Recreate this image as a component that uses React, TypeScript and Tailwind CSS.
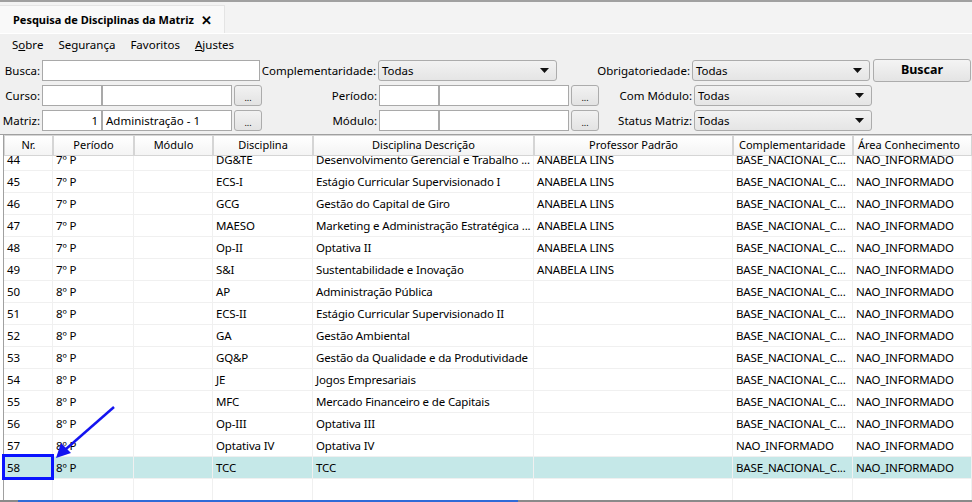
import React from "react";

const font = "[font-family:'Noto_Sans',sans-serif]";

const cols = [53, 81, 79, 100, 221, 199, 120, 119];

type Row = [string, string, string, string, string, string, string, string];

const A = "ANABELA LINS";
const B = "BASE_NACIONAL_C...";
const N = "NAO_INFORMADO";

const rows: Row[] = [
  ["44", "7º P", "", "DG&TE", "Desenvolvimento Gerencial e Trabalho ...", A, B, N],
  ["45", "7º P", "", "ECS-I", "Estágio Curricular Supervisionado I", A, B, N],
  ["46", "7º P", "", "GCG", "Gestão do Capital de Giro", A, B, N],
  ["47", "7º P", "", "MAESO", "Marketing e Administração Estratégica ...", A, B, N],
  ["48", "7º P", "", "Op-II", "Optativa II", A, B, N],
  ["49", "7º P", "", "S&I", "Sustentabilidade e Inovação", A, B, N],
  ["50", "8º P", "", "AP", "Administração Pública", "", B, N],
  ["51", "8º P", "", "ECS-II", "Estágio Curricular Supervisionado II", "", B, N],
  ["52", "8º P", "", "GA", "Gestão Ambiental", "", B, N],
  ["53", "8º P", "", "GQ&P", "Gestão da Qualidade e da Produtividade", "", B, N],
  ["54", "8º P", "", "JE", "Jogos Empresariais", "", B, N],
  ["55", "8º P", "", "MFC", "Mercado Financeiro e de Capitais", "", B, N],
  ["56", "8º P", "", "Op-III", "Optativa III", "", B, N],
  ["57", "8º P", "", "Optativa IV", "Optativa IV", "", N, N],
  ["58", "8º P", "", "TCC", "TCC", "", B, N],
  ["", "", "", "", "", "", "", ""],
];

const headers = [
  { t: "Nr.", c: "justify-center" },
  { t: "Período", c: "justify-center" },
  { t: "Módulo", c: "justify-center" },
  { t: "Disciplina", c: "justify-center" },
  { t: "Disciplina Descrição", c: "justify-center" },
  { t: "Professor Padrão", c: "justify-center" },
  { t: "Complementaridade", c: "justify-start pl-[5px]" },
  { t: "Área Conhecimento", c: "justify-start pl-[4px]" },
];

function Label({ w, children }: { w: number; children: React.ReactNode }) {
  return (
    <div
      className="flex items-center justify-end pr-[2px] text-[11.5px] text-black whitespace-nowrap"
      style={{ width: w }}
    >
      {children}
    </div>
  );
}

function Input({ w, children, right }: { w: number; children?: React.ReactNode; right?: boolean }) {
  return (
    <div
      className={`h-[21px] bg-white border border-[#a9a9a9] flex items-center px-[3px] text-[11.5px] text-black whitespace-nowrap overflow-hidden ${right ? "justify-end" : ""}`}
      style={{ width: w }}
    >
      {children}
    </div>
  );
}

function Select({ w }: { w: number }) {
  return (
    <div
      className="h-[21px] rounded-[3px] border border-[#acacac] bg-gradient-to-b from-[#f2f2f2] to-[#e5e5e5] flex items-center justify-between pl-[3px] pr-[7px] text-[11.5px] text-black"
      style={{ width: w }}
    >
      <span>Todas</span>
      <svg width="9" height="5" viewBox="0 0 9 5">
        <path d="M0 0 H9 L4.5 5 Z" fill="#111" />
      </svg>
    </div>
  );
}

function Dots() {
  return (
    <div className="ml-[2px] w-[28px] h-[21px] rounded-[3px] border border-[#acacac] bg-gradient-to-b from-[#f2f2f2] to-[#e3e3e3] flex items-end justify-center pb-[3px] text-[9px] leading-none text-black">
      ...
    </div>
  );
}

export default function App() {
  return (
    <div className={`${font} w-[972px] h-[502px] bg-[#f0f0f0] overflow-hidden relative`}>
      {/* top line */}
      <div className="h-[2px] bg-[#a0a0a0]" />
      {/* tab strip */}
      <div className="h-[32px] bg-[#f3f3f3] flex items-end border-b border-white">
        <div className="w-[225px] h-[28px] bg-[#f9f9f9] border-r border-t border-[#e4e4e4] flex items-center pl-[13px] pt-[1px] text-[11px] font-bold text-black">
          <span>Pesquisa de Disciplinas da Matriz</span>
          <span className="ml-[7px] text-[13px] leading-none">✕</span>
        </div>
      </div>
      {/* menu */}
      <div className="h-[22px] flex items-center text-[11.5px] text-black">
        <span className="ml-[12px]">
          S<span className="underline">o</span>bre
        </span>
        <span className="ml-[15px]">Segurança</span>
        <span className="ml-[15px]">Favoritos</span>
        <span className="ml-[15px]">
          <span className="underline">A</span>justes
        </span>
      </div>
      {/* filters */}
      <div className="pt-[4px] flex flex-col gap-[4px]">
        <div className="flex items-center h-[21px]">
          <Label w={42}>Busca:</Label>
          <Input w={218} />
          <Label w={118}>Complementaridade:</Label>
          <Select w={179} />
          <Label w={135}>Obrigatoriedade:</Label>
          <Select w={178} />
          <div className="ml-[3px] w-[98px] h-[23px] rounded-[3px] border border-[#acacac] bg-gradient-to-b from-[#f4f4f4] to-[#e4e4e4] flex items-center justify-center text-[12.5px] font-bold text-black">
            Buscar
          </div>
        </div>
        <div className="flex items-center h-[21px]">
          <Label w={42}>Curso:</Label>
          <Input w={60} />
          <Input w={130} />
          <Dots />
          <Label w={117}>Período:</Label>
          <Input w={60} />
          <Input w={130} />
          <Dots />
          <Label w={95}>Com Módulo:</Label>
          <Select w={178} />
        </div>
        <div className="flex items-center h-[21px]">
          <Label w={42}>Matriz:</Label>
          <Input w={60} right>
            1
          </Input>
          <Input w={130}>Administração - 1</Input>
          <Dots />
          <Label w={117}>Módulo:</Label>
          <Input w={60} />
          <Input w={130} />
          <Dots />
          <Label w={95}>Status Matriz:</Label>
          <Select w={178} />
        </div>
      </div>
      {/* table */}
      <div className="mt-[3px] bg-white border-t border-[#a0a0a0] h-[366px] pl-[3px] relative">
        <div className="border-l border-[#a0a0a0] h-full flex flex-col">
          <div className="flex h-[21px] shrink-0">
            {headers.map((h, i) => (
              <div
                key={i}
                className={`h-full flex items-center border border-[#d5d5d5] bg-gradient-to-b from-white to-[#f4f4f4] text-[11px] text-black whitespace-nowrap overflow-hidden ${h.c}`}
                style={{ width: i === 0 ? cols[0] - 4 : cols[i] }}
              >
                {h.t}
              </div>
            ))}
          </div>
          <div className="flex-1 overflow-hidden">
            <div className="-mt-[7px]">
              {rows.map((r, ri) => {
                const sel = r[0] === "58";
                return (
                  <div key={ri} className={`flex h-[22px] ${sel ? "bg-[#c5e8e8]" : ""}`}>
                    {r.map((c, ci) => (
                      <div
                        key={ci}
                        className="h-full flex items-center border-r border-b border-[#f0f0f0] pl-[3px] text-[11.5px] tracking-[-0.15px] text-black whitespace-nowrap overflow-hidden"
                        style={{ width: ci === 0 ? cols[0] - 4 : cols[ci] }}
                      >
                        {c}
                      </div>
                    ))}
                  </div>
                );
              })}
            </div>
          </div>
        </div>
        {/* highlight box */}
        <div className="absolute left-[2px] top-[319px] w-[52px] h-[26px] border-[3px] border-[#0a14ff]" />
      </div>
      {/* bottom line */}
      <div className="absolute left-0 right-0 bottom-0 h-[2px] bg-[#8a8a8a]" />
      <div className="absolute left-[18px] w-[500px] bottom-0 h-[2px] bg-[#2f6bd8]" />
      {/* arrow */}
      <svg className="absolute left-0 top-0 pointer-events-none" width="972" height="502">
        <line x1="114" y1="407" x2="66" y2="449" stroke="#1414f0" strokeWidth="2.5" />
        <path d="M56 458 L61 443 L71 453 Z" fill="#1414f0" />
      </svg>
    </div>
  );
}
